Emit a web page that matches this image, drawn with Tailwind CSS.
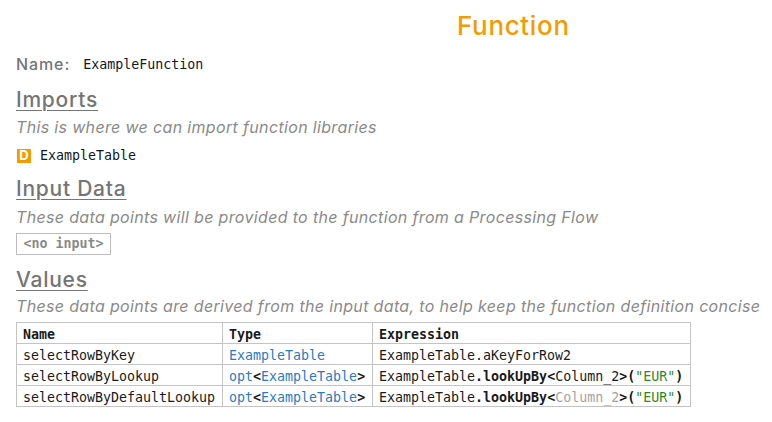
<!DOCTYPE html>
<html lang="en">
  <head>
    <meta charset="UTF-8" />
    <title>Function</title>
    <script src="https://cdn.jsdelivr.net/npm/@tailwindcss/browser@4"></script>
  </head>
  <body class="bg-white font-['Inter',sans-serif] text-[#757575]">
    <div class="w-[772px] h-[422px] overflow-hidden px-4 pt-[11px]">
      <h1 class="pl-[441px] text-[26px] leading-[30px] font-medium tracking-[0.65px] text-[#f59b00]">Function</h1>

      <div class="mt-[11px] flex items-center h-[24px]">
        <span class="mb-px text-[16px] font-medium tracking-[0.9px]">Name:</span>
        <span class="ml-[13px] mt-px font-['DejaVu_Sans_Mono',monospace] text-[13.3px] text-[#111827]">ExampleFunction</span>
      </div>

      <h2 class="mt-[12px] text-[21px] leading-[24px] font-medium underline underline-offset-[3px] decoration-1 tracking-[0.75px]">Imports</h2>
      <p class="mt-[5px] text-[16px] leading-[20px] italic tracking-[0.34px] text-[#8a8a8a] whitespace-nowrap">This is where we can import function libraries</p>
      <div class="mt-[9px] flex items-center h-[20px]">
        <span class="ml-px flex w-[14px] h-[14px] items-center justify-center bg-[#f59b00] text-[13px] font-bold text-white">D</span>
        <span class="ml-[9px] font-['DejaVu_Sans_Mono',monospace] text-[13.3px] text-[#111827]">ExampleTable</span>
      </div>

      <h2 class="mt-[11px] text-[21px] leading-[24px] font-medium underline underline-offset-[3px] decoration-1 tracking-[0.75px]">Input Data</h2>
      <p class="mt-[6px] text-[16px] leading-[20px] italic tracking-[0.34px] text-[#8a8a8a] whitespace-nowrap">These data points will be provided to the function from a Processing Flow</p>
      <div class="mt-[6px] inline-block h-[22px] border border-[#bdbdbd] px-[6.5px] font-['DejaVu_Sans_Mono',monospace] text-[13.3px] leading-[20px] font-bold text-[#8a8a8a]">&lt;no input&gt;</div>

      <h2 class="mt-[13px] text-[21px] leading-[24px] font-medium underline underline-offset-[3px] decoration-1 tracking-[0.75px]">Values</h2>
      <p class="mt-[4px] text-[16px] leading-[20px] italic tracking-[0.34px] text-[#8a8a8a] whitespace-nowrap">These data points are derived from the input data, to help keep the function definition concise</p>

      <table class="mt-[6px] w-[674px] table-fixed border-collapse font-['DejaVu_Sans_Mono',monospace] text-[13.3px] leading-[17px] text-[#1a1a1a]">
        <colgroup>
          <col class="w-[206px]" />
          <col class="w-[150px]" />
          <col class="w-[318px]" />
        </colgroup>
        <thead>
          <tr class="font-bold text-left">
            <th class="border border-[#c4c4c4] px-[6px] pt-[3px]">Name</th>
            <th class="border border-[#c4c4c4] px-[6px] pt-[3px]">Type</th>
            <th class="border border-[#c4c4c4] px-[6px] pt-[3px]">Expression</th>
          </tr>
        </thead>
        <tbody>
          <tr>
            <td class="border border-[#c4c4c4] px-[6px] pt-[3px]">selectRowByKey</td>
            <td class="border border-[#c4c4c4] px-[6px] pt-[3px] text-[#2b7bc4]">ExampleTable</td>
            <td class="border border-[#c4c4c4] px-[6px] pt-[3px]">ExampleTable.aKeyForRow2</td>
          </tr>
          <tr>
            <td class="border border-[#c4c4c4] px-[6px] pt-[3px]">selectRowByLookup</td>
            <td class="border border-[#c4c4c4] px-[6px] pt-[3px]"><span class="text-[#2b7bc4]">opt</span><b>&lt;</b><span class="text-[#2b7bc4]">ExampleTable</span><b>&gt;</b></td>
            <td class="border border-[#c4c4c4] px-[6px] pt-[3px]">ExampleTable<b>.lookUpBy&lt;</b>Column_2<b>&gt;(</b><span class="text-[#2e8b1e]">"EUR"</span><b>)</b></td>
          </tr>
          <tr>
            <td class="border border-[#c4c4c4] px-[6px] pt-[3px]">selectRowByDefaultLookup</td>
            <td class="border border-[#c4c4c4] px-[6px] pt-[3px]"><span class="text-[#2b7bc4]">opt</span><b>&lt;</b><span class="text-[#2b7bc4]">ExampleTable</span><b>&gt;</b></td>
            <td class="border border-[#c4c4c4] px-[6px] pt-[3px]">ExampleTable<b>.lookUpBy&lt;</b><span class="text-[#a8a29e]">Column_2</span><b>&gt;(</b><span class="text-[#2e8b1e]">"EUR"</span><b>)</b></td>
          </tr>
        </tbody>
      </table>
    </div>
  </body>
</html>
